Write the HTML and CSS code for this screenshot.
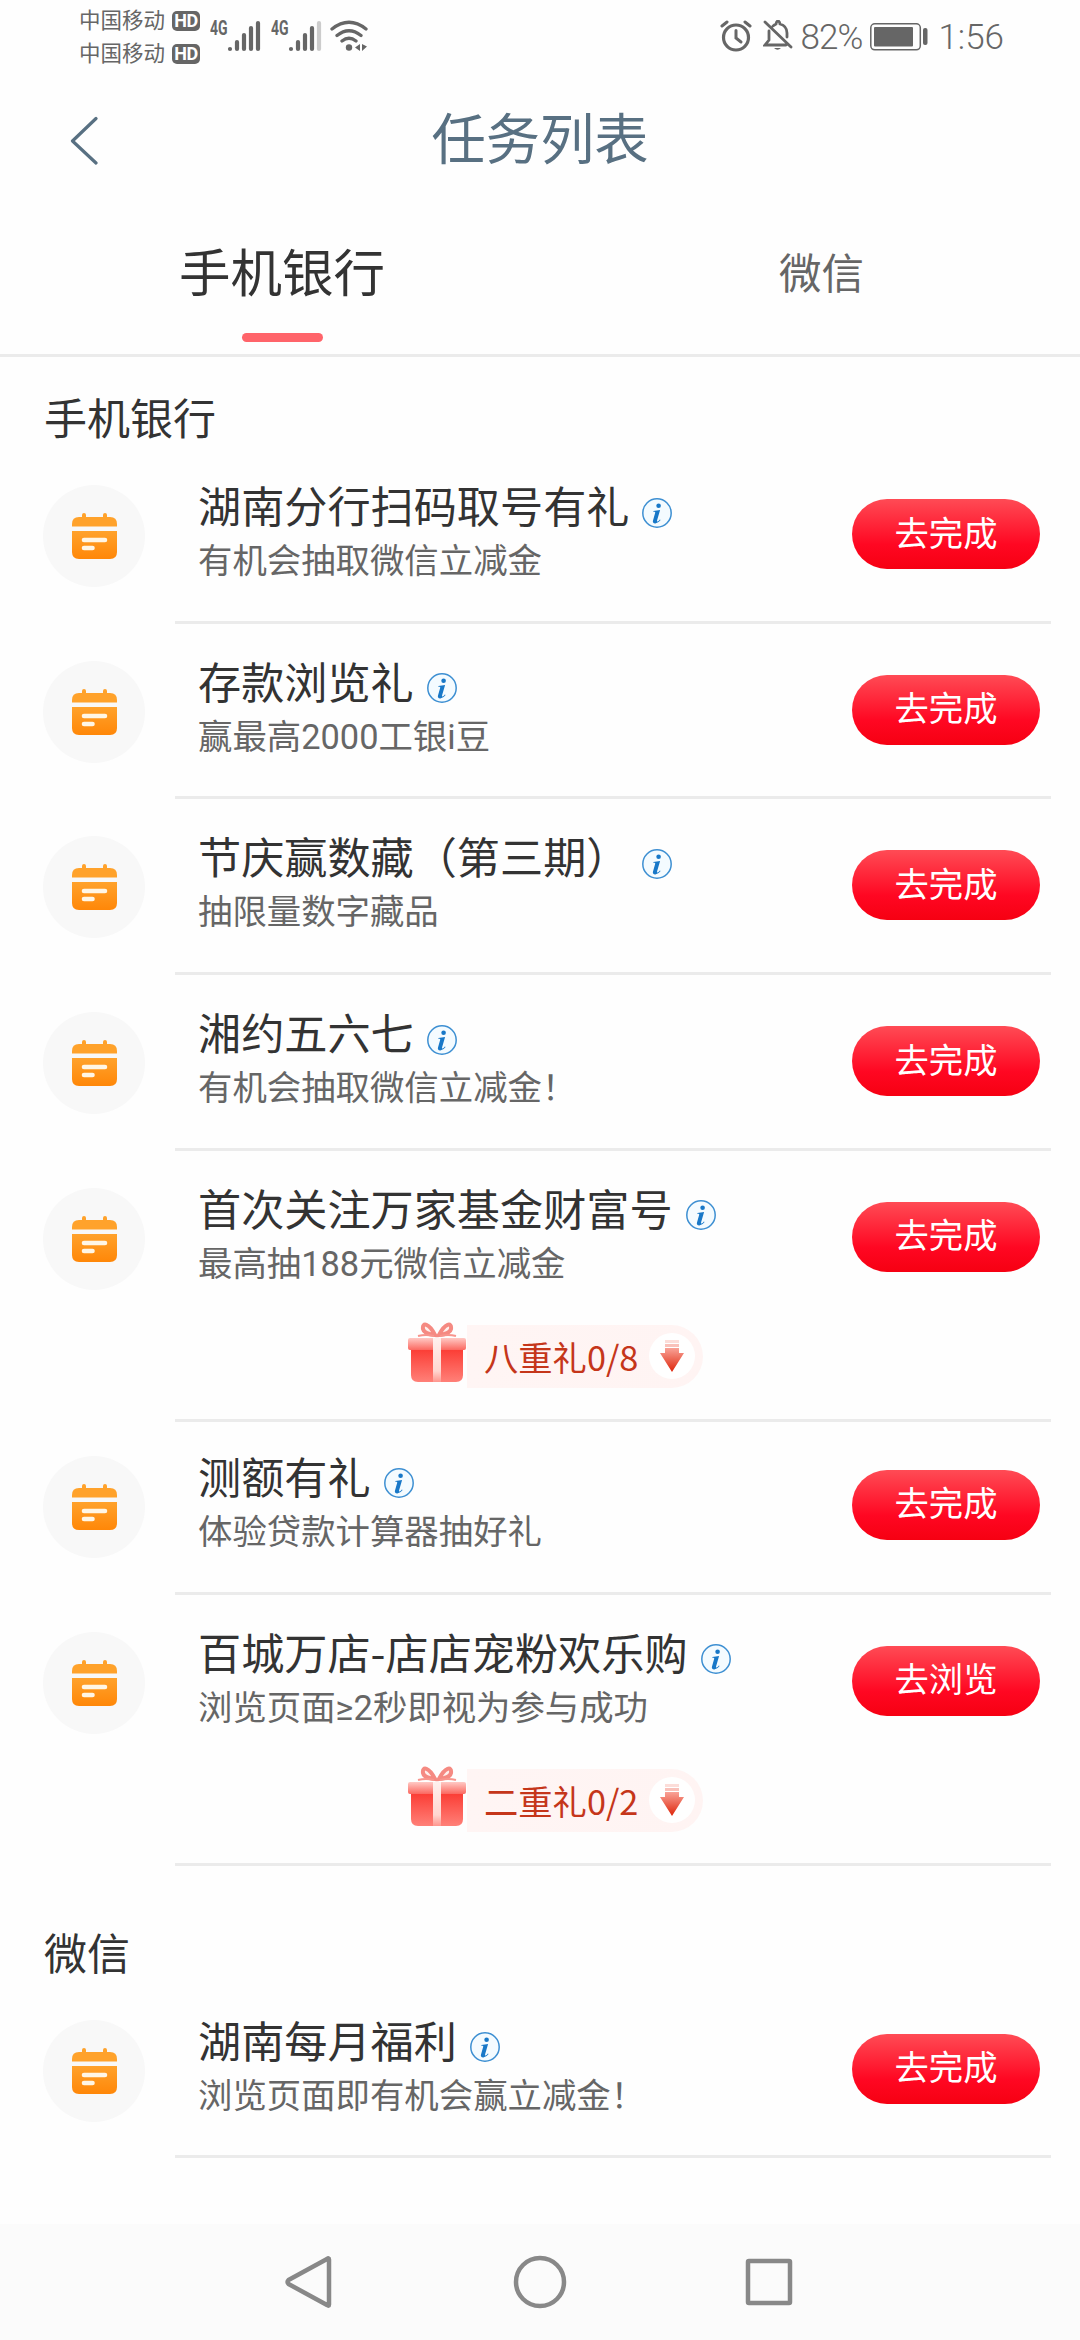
FILE: index.html
```html
<!DOCTYPE html>
<html lang="zh-CN">
<head>
<meta charset="utf-8">
<title>任务列表</title>
<link rel="stylesheet" href="styles.css">
</head>
<body>
<svg class="defs" aria-hidden="true">
  <defs>
    <linearGradient id="orange" x1="0" y1="0" x2="0" y2="1"><stop offset="0" stop-color="#ffa22c"/><stop offset="1" stop-color="#ff8708"/></linearGradient>
    <linearGradient id="box" x1="0" y1="0" x2="0" y2="1"><stop offset="0" stop-color="#fb3a32"/><stop offset="1" stop-color="#ff8078"/></linearGradient>
    <linearGradient id="lid" x1="0" y1="0" x2="0" y2="1"><stop offset="0" stop-color="#ffc9c4"/><stop offset="1" stop-color="#fb6860"/></linearGradient>
    <linearGradient id="ribbon" x1="0" y1="0" x2="0" y2="1"><stop offset="0" stop-color="#fff1ee"/><stop offset=".75" stop-color="#ffd6d0"/><stop offset="1" stop-color="#ff968e"/></linearGradient>
    <linearGradient id="arrow" x1="0" y1="0" x2="0" y2="1"><stop offset="0" stop-color="#f9a297"/><stop offset="1" stop-color="#de2409"/></linearGradient>
    <symbol id="calendar" viewBox="0 0 45 46">
      <path d="M0 18h45v21q0 7-7 7H7q-7 0-7-7z" fill="url(#orange)"/>
      <path d="M7 4h3V2q0-2 2-2t2 2v2h17V2q0-2 2-2t2 2v2h3q7 0 7 7v2.500H0V11q0-7 7-7z" fill="#ffa22b"/>
      <path d="M12 27h21M12 35h8.500" stroke="#fff6e6" stroke-width="4.600" stroke-linecap="round"/>
    </symbol>
    <symbol id="info" viewBox="0 0 30 30">
      <circle cx="15" cy="15" r="14.200" fill="#f4fbff" stroke="#3d8fd2" stroke-width="1.500"/>
      <circle cx="16.600" cy="7.800" r="2.300" fill="#1878c8"/>
      <path d="M11.400 13.100l6.700-1-3 10.200q-.4 1.500.7 1.100 1-.4 2.100-1.800l.7.5q-2.300 3.400-5.400 3.300-3-.1-2.200-2.900l2.200-7.800q.2-1-.7-1h-1.200z" fill="#1878c8"/>
    </symbol>
    <symbol id="gift" viewBox="0 0 60 62">
      <path d="M4 26h52v27q0 7-7 7H11q-7 0-7-7z" fill="url(#box)"/>
      <rect x="1" y="16" width="58" height="12" rx="2" fill="url(#lid)"/>
      <rect x="26" y="16" width="8" height="44" fill="url(#ribbon)"/>
      <path d="M28 13C22 1 15 0 16 7q1 5 12 6zM32 13C38 1 45 0 44 7q-1 5-12 6z" fill="#fff0ed" stroke="#f58a82" stroke-width="4"/>
      <path d="M11 14q8-2 16 0M33 14q8-2 16 0" fill="none" stroke="#f8958d" stroke-width="2"/>
    </symbol>
    <symbol id="down" viewBox="0 0 24 32">
      <path d="M5 0h14v3H5z" fill="#fcddd9"/><path d="M5 4h14v3H5z" fill="#f9c1ba"/>
      <path d="M5 8h14v5h5L12 32 0 13h5z" fill="url(#arrow)"/>
    </symbol>
  </defs>
</svg>

<header class="status">
  <div class="carriers">
    <div class="carrier"><span>中国移动</span><b>HD</b></div>
    <div class="carrier"><span>中国移动</span><b>HD</b></div>
  </div>
  <div class="signal"><span>4G</span>
    <svg width="34" height="32" viewBox="0 0 34 32"><path d="M3 29h0M10 29v-7M17 29V15M24 29V8M31 29V3" class="bars"/></svg>
  </div>
  <div class="signal"><span>4G</span>
    <svg width="34" height="32" viewBox="0 0 34 32"><path d="M3 29h0M10 29v-7M17 29V15M24 29V8" class="bars"/><path d="M31 29V3" class="bars dim"/></svg>
  </div>
  <svg class="wifi" width="38" height="32" viewBox="0 0 38 32">
    <path d="M2 9q17-13.500 34 0M7 15.500q12-9.500 24 0M12 21q7-5.500 14 0" fill="none" stroke="#666" stroke-width="3.300" stroke-linecap="round"/>
    <circle cx="19" cy="27.500" r="3.200" fill="#666"/><path d="M30 24v7l-5-3.500zM32 24l5 2.500-5 4.500z" fill="#666"/>
  </svg>
  <div class="status-right">
    <svg width="32" height="32" viewBox="0 0 32 32" fill="none" stroke="#666" stroke-linecap="round"><circle cx="16" cy="17.500" r="12.500" stroke-width="3.200"/><path d="M2 6l5-4M25 2l5 4" stroke-width="3"/><path d="M16 10.500V18l5 4" stroke-width="3"/></svg>
    <svg class="bell" width="30" height="32" viewBox="0 0 30 32" fill="none" stroke="#666" stroke-width="2.800"><path d="M6 11v9l-4 5h21M10 6q2-1.500 3-2 .5-3 2-3t2 3q7 2 7 9v4M2 2l26 25" stroke-linecap="round"/><path d="M11 28h7q-3.500 3.500-7 0z" fill="#666" stroke="none"/></svg>
    <span class="percent">82%</span>
    <svg class="battery" width="58" height="28" viewBox="0 0 58 28"><rect x=".8" y=".8" width="49.500" height="26" rx="4" fill="none" stroke="#666" stroke-width="1.500"/><rect x="4" y="4" width="39" height="19.500" rx="1" fill="#666"/><rect x="53" y="5" width="4.500" height="17" rx="2" fill="#666"/></svg>
    <span class="clock">1:56</span>
  </div>
</header>

<nav class="titlebar">
  <svg class="back" width="28" height="50" viewBox="0 0 28 50"><path d="M26 2.500L2.500 25 26 47" fill="none" stroke="#587082" stroke-width="3.200" stroke-linecap="round" stroke-linejoin="round"/></svg>
  <h1>任务列表</h1>
</nav>

<div class="tabs">
  <div class="tab active">手机银行</div>
  <div class="tab">微信</div>
</div>

<main>
  <section>
    <h2>手机银行</h2>
    <article class="task">
      <div class="badge"><svg width="45" height="46"><use href="#calendar"/></svg></div>
      <div class="body"><div class="main"><div class="text"><h3>湖南分行扫码取号有礼<svg class="info"><use href="#info"/></svg></h3><p>有机会抽取微信立减金</p></div><button>去完成</button></div></div>
    </article>
    <article class="task">
      <div class="badge"><svg width="45" height="46"><use href="#calendar"/></svg></div>
      <div class="body"><div class="main"><div class="text"><h3>存款浏览礼<svg class="info"><use href="#info"/></svg></h3><p>赢最高2000工银i豆</p></div><button>去完成</button></div></div>
    </article>
    <article class="task">
      <div class="badge"><svg width="45" height="46"><use href="#calendar"/></svg></div>
      <div class="body"><div class="main"><div class="text"><h3>节庆赢数藏（第三期）<svg class="info"><use href="#info"/></svg></h3><p>抽限量数字藏品</p></div><button>去完成</button></div></div>
    </article>
    <article class="task">
      <div class="badge"><svg width="45" height="46"><use href="#calendar"/></svg></div>
      <div class="body"><div class="main"><div class="text"><h3>湘约五六七<svg class="info"><use href="#info"/></svg></h3><p>有机会抽取微信立减金！</p></div><button>去完成</button></div></div>
    </article>
    <article class="task">
      <div class="badge"><svg width="45" height="46"><use href="#calendar"/></svg></div>
      <div class="body"><div class="main"><div class="text"><h3>首次关注万家基金财富号<svg class="info"><use href="#info"/></svg></h3><p>最高抽188元微信立减金</p></div><button>去完成</button></div>
        <div class="reward"><svg class="gift"><use href="#gift"/></svg><div class="pill"><span>八重礼0/8</span><i><svg width="24" height="32"><use href="#down"/></svg></i></div></div></div>
    </article>
    <article class="task short">
      <div class="badge"><svg width="45" height="46"><use href="#calendar"/></svg></div>
      <div class="body"><div class="main"><div class="text"><h3>测额有礼<svg class="info"><use href="#info"/></svg></h3><p>体验贷款计算器抽好礼</p></div><button>去完成</button></div></div>
    </article>
    <article class="task">
      <div class="badge"><svg width="45" height="46"><use href="#calendar"/></svg></div>
      <div class="body"><div class="main"><div class="text"><h3>百城万店-店店宠粉欢乐购<svg class="info"><use href="#info"/></svg></h3><p>浏览页面≥2秒即视为参与成功</p></div><button>去浏览</button></div>
        <div class="reward"><svg class="gift"><use href="#gift"/></svg><div class="pill"><span>二重礼0/2</span><i><svg width="24" height="32"><use href="#down"/></svg></i></div></div></div>
    </article>
  </section>
  <section class="wechat">
    <h2>微信</h2>
    <article class="task">
      <div class="badge"><svg width="45" height="46"><use href="#calendar"/></svg></div>
      <div class="body"><div class="main"><div class="text"><h3>湖南每月福利<svg class="info"><use href="#info"/></svg></h3><p>浏览页面即有机会赢立减金！</p></div><button>去完成</button></div></div>
    </article>
  </section>
</main>

<footer class="sysnav">
  <svg width="52" height="54" viewBox="0 0 52 54"><path d="M44 4.500v45q0 2-2 .5L3.500 29q-2-2 0-4L42 4q2-1.500 2 .5z"/></svg>
  <svg width="54" height="54" viewBox="0 0 54 54"><circle cx="27" cy="27" r="24"/></svg>
  <svg width="54" height="54" viewBox="0 0 54 54"><rect x="6" y="6" width="42" height="42" rx="1"/></svg>
</footer>
</body>
</html>
```

FILE: styles.css
```css
* { box-sizing: border-box; margin: 0; padding: 0; }
body {
  width: 1080px;
  height: 2340px;
  display: flex;
  flex-direction: column;
  background: #fefefe;
  color: #333;
  font-family: Roboto, "Noto Sans CJK SC", sans-serif;
  overflow: hidden;
}
svg { display: block; flex: none; }
.defs { position: absolute; width: 0; height: 0; }
h1, h2, h3 { font-weight: 400; }

.status {
  height: 80px;
  display: flex;
  align-items: flex-start;
  padding: 4px 76px 0 79px;
  color: #666;
}
.carriers { width: 131px; }
.carrier { display: flex; align-items: center; height: 33px; gap: 7px; font-size: 21.5px; line-height: 33px; white-space: nowrap; }
.carrier b {
  width: 28px; height: 20px; border-radius: 5px;
  background: #666; color: #fff;
  font: 700 18px/20px Roboto, sans-serif; text-align: center; letter-spacing: -.5px;
}
.signal { display: flex; width: 61px; padding-top: 16px; }
.signal span { width: 17px; font: 700 20px/17px Roboto, sans-serif; transform: scaleX(.7); transform-origin: left; white-space: nowrap; }
.bars { fill: none; stroke: #666; stroke-width: 4.200; stroke-linecap: round; }
.dim { stroke: #ccc; }
.wifi { margin: 16px 0 0 -2px; }
.status-right { margin-left: auto; display: flex; padding-top: 16px; font-size: 35px; line-height: 35px; font-weight: 300; }
.bell { margin: 0 7px 0 11px; }
.percent { width: 61px; letter-spacing: -.9px; }
.battery { margin: 3px 10px 0 9px; }

.titlebar { display: flex; align-items: center; height: 120px; padding: 2px 70px 0; }
.titlebar h1 { flex: 1; margin-right: 28px; text-align: center; font-size: 54.300px; line-height: 80px; color: #587082; }

.tabs { display: flex; height: 157px; padding-left: 24px; border-bottom: 3px solid #ebebeb; }
.tab { flex: none; width: 516px; text-align: center; font-size: 42.500px; line-height: 150px; color: #666; }
.tab + .tab { width: 540px; margin-left: 12px; padding-right: 1px; }
.tab.active { font-size: 51.500px; color: #333; }
.tab.active::after { content: ""; display: block; width: 81px; height: 9px; margin: -17px auto 0; border-radius: 4.500px; background: #ff646a; }

h2 { height: 91px; padding-left: 44px; font-size: 43px; line-height: 126px; }
.task { display: flex; height: 175.700px; }
.task:has(.reward) { height: 271px; }
.task.short { height: 173px; }
.badge { display: flex; align-items: center; justify-content: center; width: 102px; height: 102px; margin: 37px 30px 0 43px; border-radius: 50%; background: #f8f8f8; }
.body { flex: 1; margin-right: 29px; padding: 32px 11px 0 23px; border-bottom: 3px solid #ebebeb; }
.main { display: flex; justify-content: space-between; }
h3 { display: flex; align-items: center; margin-bottom: 7px; font-family: "Noto Sans CJK SC", sans-serif; font-size: 43.150px; line-height: 48px; white-space: nowrap; }
.info { width: 30px; height: 30px; margin: 17px 0 0 13px; }
.text p { font-size: 34.400px; line-height: 53px; color: #666; white-space: nowrap; }
button {
  width: 188px; height: 70px; margin-top: 19px; padding-bottom: 4px;
  border: 0; border-radius: 35px;
  background: linear-gradient(#ff4b55, #ff0722 65%, #f60012);
  color: #fff; font: 34.300px/62px "Noto Sans CJK SC", sans-serif;
  padding-bottom: 7px;
}
.reward { display: flex; align-items: flex-start; margin: 31px 0 0 209px; }
.gift { width: 60px; height: 62px; }
.pill { display: flex; align-items: center; width: 236px; height: 63px; margin-top: 3px; padding-left: 17px; border-radius: 0 32px 32px 0; background: linear-gradient(90deg, #fff5f4, #fff4f3); color: #c5361a; font: 34.300px/61px "Noto Sans CJK SC", sans-serif; }
.pill i { display: flex; align-items: center; justify-content: center; width: 46px; height: 46px; margin: 0 8px 0 auto; border-radius: 50%; background: #fff; }
.short .badge { margin-top: 34px; }
.short .body { padding-top: 29px; }

.wechat h2 { height: 117px; line-height: 178px; }
.sysnav { display: flex; height: 116px; margin-top: auto; padding: 31px 284px 0 285px; justify-content: space-between; background: #fbfbfb; }
.sysnav svg { fill: none; stroke: #888; stroke-width: 4.500; stroke-linejoin: round; }
```
